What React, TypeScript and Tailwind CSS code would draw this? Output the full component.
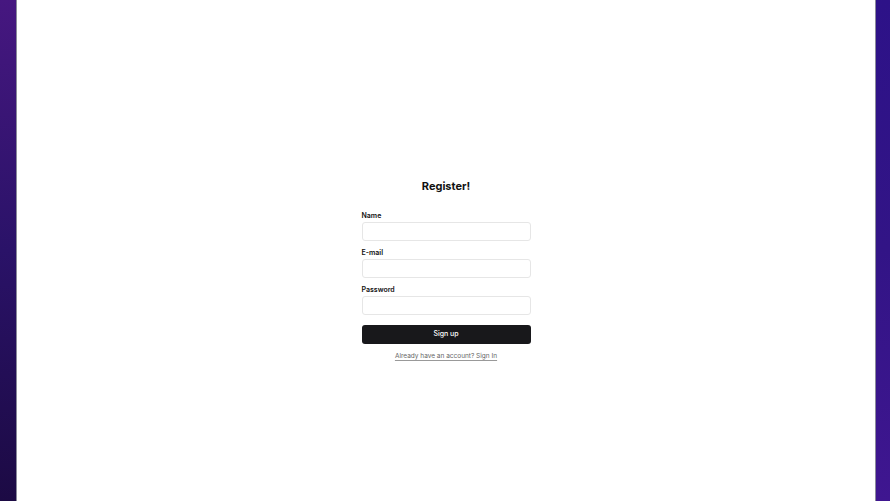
import React from 'react';

function Field({ label, type }: { label: string; type: string }) {
  return (
    <div className="flex flex-col">
      <label className="text-[7px] font-semibold leading-[9px] text-[#111]">{label}</label>
      <input
        type={type}
        className="mt-[2px] h-[19px] w-full rounded-[3px] border border-[#e6e6e6] bg-white px-2 text-[7px] outline-none"
      />
    </div>
  );
}

export default function App() {
  return (
    <div className="flex h-[501px] w-[890px] overflow-hidden" style={{ fontFamily: 'Inter, "Liberation Sans", sans-serif' }}>
      <div className="w-[16px] shrink-0 bg-gradient-to-b from-[#461780] via-[#2a1268] to-[#1c0a44]" />
      <div className="w-px shrink-0 bg-[#8a8a9a]" />
      <main className="flex flex-1 flex-col items-center bg-white pt-[177px]">
        <h1 className="text-[11px] font-bold leading-[18px] text-[#111]">Register!</h1>
        <form className="mt-[16px] flex w-[169px] flex-col gap-[7px]">
          <Field label="Name" type="text" />
          <Field label="E-mail" type="email" />
          <Field label="Password" type="password" />
          <button
            type="button"
            className="mt-[3px] h-[19px] w-full rounded-[3px] bg-[#18181b] text-[7px] font-medium text-white"
          >
            Sign up
          </button>
          <a className="self-center text-[6.5px] leading-[10px] text-[#666] underline decoration-[#999] underline-offset-2">
            Already have an account? Sign In
          </a>
        </form>
      </main>
      <div className="w-px shrink-0 bg-[#8a8a9a]" />
      <div className="w-[14px] shrink-0 bg-gradient-to-b from-[#2d1288] via-[#321486] to-[#3f1690]" />
    </div>
  );
}
